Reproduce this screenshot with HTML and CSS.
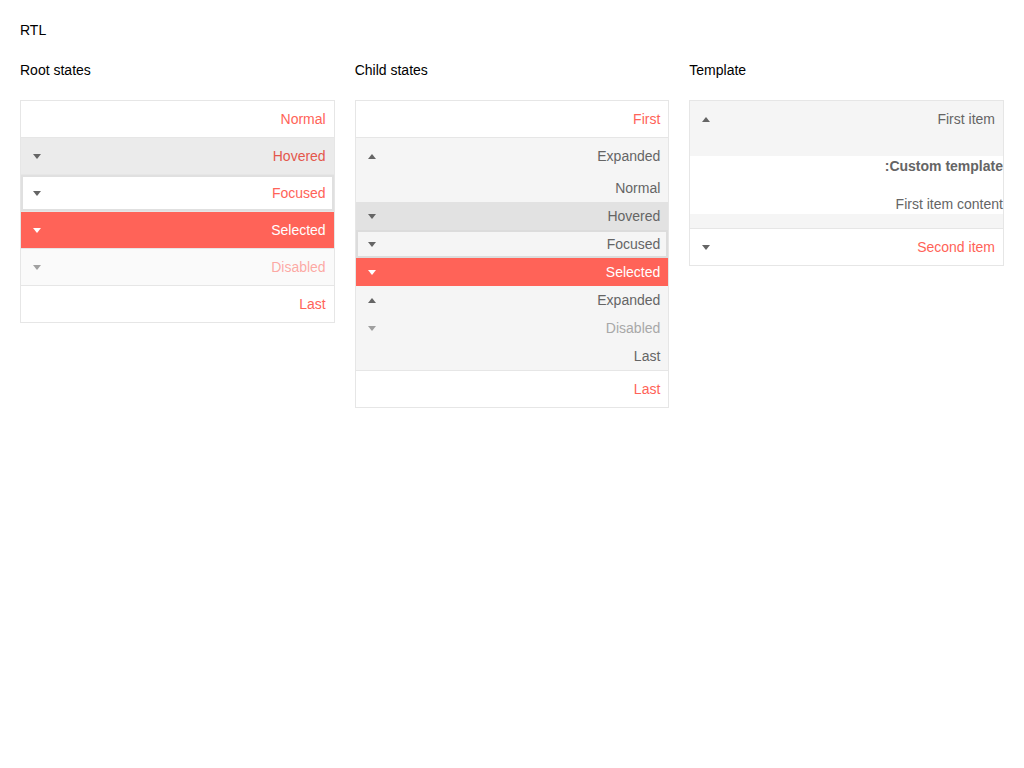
FILE: index.html
```html
<!DOCTYPE html>
<html lang="en">
<head>
<meta charset="utf-8">
<title>PanelBar RTL</title>
<link rel="stylesheet" href="styles.css">
</head>
<body>
<div class="page">
  <div class="page-title">RTL</div>
  <div class="columns">
    <section class="col">
      <h3 class="col-title">Root states</h3>
      <ul class="panelbar" dir="rtl">
        <li class="item"><span class="link">Normal</span></li>
        <li class="item"><span class="link hover"><span class="label">Hovered</span><span class="arrow down"></span></span></li>
        <li class="item"><span class="link focus"><span class="label">Focused</span><span class="arrow down"></span></span></li>
        <li class="item"><span class="link selected"><span class="label">Selected</span><span class="arrow down"></span></span></li>
        <li class="item"><span class="link disabled"><span class="label">Disabled</span><span class="arrow down"></span></span></li>
        <li class="item"><span class="link">Last</span></li>
      </ul>
    </section>
    <section class="col">
      <h3 class="col-title">Child states</h3>
      <ul class="panelbar" dir="rtl">
        <li class="item"><span class="link">First</span></li>
        <li class="item expanded">
          <span class="link expanded-link"><span class="label">Expanded</span><span class="arrow up"></span></span>
          <ul class="group">
            <li><span class="sub">Normal</span></li>
            <li><span class="sub hover"><span class="label">Hovered</span><span class="arrow down"></span></span></li>
            <li><span class="sub focus"><span class="label">Focused</span><span class="arrow down"></span></span></li>
            <li><span class="sub selected"><span class="label">Selected</span><span class="arrow down"></span></span></li>
            <li><span class="sub"><span class="label">Expanded</span><span class="arrow up"></span></span></li>
            <li><span class="sub disabled"><span class="label">Disabled</span><span class="arrow down"></span></span></li>
            <li><span class="sub">Last</span></li>
          </ul>
        </li>
        <li class="item"><span class="link">Last</span></li>
      </ul>
    </section>
    <section class="col">
      <h3 class="col-title">Template</h3>
      <ul class="panelbar" dir="rtl">
        <li class="item expanded">
          <span class="link expanded-link"><span class="label">First item</span><span class="arrow up"></span></span>
          <div class="content">
            <div class="template">
              <h4 class="tpl-title">Custom template:</h4>
              <p class="tpl-text">First item content</p>
            </div>
          </div>
        </li>
        <li class="item"><span class="link"><span class="label">Second item</span><span class="arrow down"></span></span></li>
      </ul>
    </section>
  </div>
</div>
</body>
</html>
```
FILE: styles.css
```css
* { box-sizing: border-box; }
html, body { margin: 0; padding: 0; background: #fff; }
body {
  font-family: "Liberation Sans", Arial, sans-serif;
  font-size: 14px;
  line-height: 20px;
  color: #000;
}
.page { padding: 20px; }
.page-title { line-height: 20px; margin-bottom: 20px; }
.columns {
  display: grid;
  grid-template-columns: repeat(3, 1fr);
  column-gap: 20px;
}
.col-title {
  margin: 0 0 20px 0;
  font-size: 14px;
  font-weight: normal;
  line-height: 20px;
}
.panelbar {
  list-style: none;
  margin: 0;
  padding: 0;
  border: 1px solid #e6e6e6;
  background: #fff;
  color: #ff6358;
}
.item { border-top: 1px solid #e6e6e6; }
.item:first-child { border-top: 0; }
.link {
  display: flex;
  align-items: center;
  justify-content: space-between;
  padding: 8px 8px;
  line-height: 20px;
  min-height: 36px;
}
.link.hover { background: #ebebeb; color: #e4574c; }
.link.focus { box-shadow: inset 0 0 0 2px #e0e0e0; }
.link.selected { background: #ff6358; color: #fff; }
.link.disabled { background: #fafafa; color: rgba(255, 99, 88, 0.55); }
.link.disabled .arrow { opacity: 0.6; }
.expanded-link { background: #f5f5f5; color: #656565; }
.arrow {
  width: 16px;
  height: 16px;
  display: inline-flex;
  align-items: center;
  justify-content: center;
  flex: none;
}
.arrow::before {
  content: "";
  display: block;
  border-left: 4.5px solid transparent;
  border-right: 4.5px solid transparent;
}
.arrow.down::before { border-top: 5px solid #656565; }
.arrow.up::before { border-bottom: 5px solid #656565; }
.selected .arrow.down::before { border-top-color: #fff; }
.group {
  list-style: none;
  margin: 0;
  padding: 0;
  background: #f5f5f5;
  color: #656565;
}
.sub {
  display: flex;
  align-items: center;
  justify-content: space-between;
  padding: 4px 8px;
  line-height: 20px;
  min-height: 28px;
}
.sub.hover { background: #e2e2e2; }
.sub.focus { box-shadow: inset 0 0 0 2px #dcdcdc; }
.sub.selected { background: #ff6358; color: #fff; }
.sub.disabled { color: #a8a8a8; }
.sub.disabled .arrow { opacity: 0.6; }
.content {
  background: #f5f5f5;
  padding: 19px 0 14px;
  color: #656565;
}
.template { background: #fff; }
.tpl-title {
  margin: 0 0 18px 0;
  font-size: 14px;
  font-weight: bold;
  line-height: 20px;
}
.tpl-text { margin: 0; line-height: 20px; }
```
